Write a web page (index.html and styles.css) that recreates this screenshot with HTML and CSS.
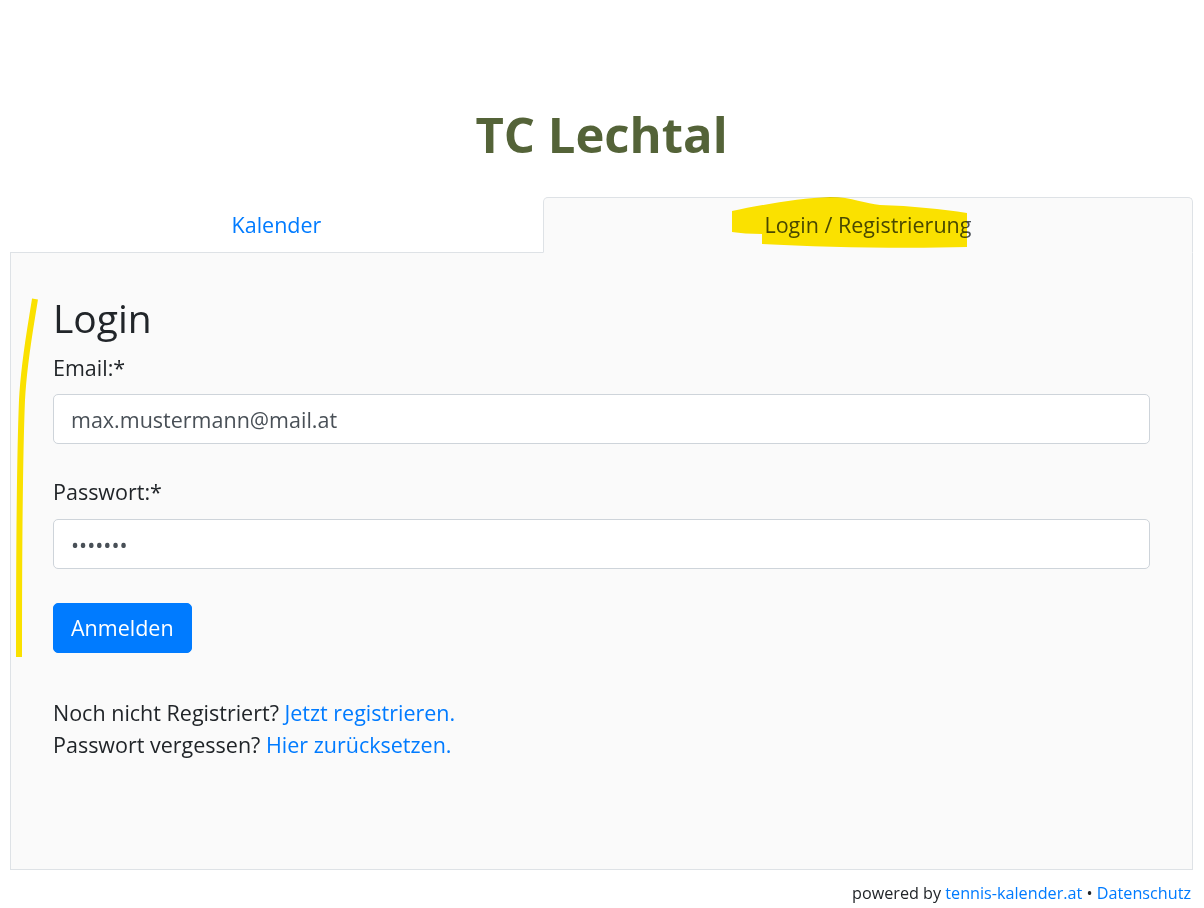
FILE: index.html
```html
<!DOCTYPE html>
<html lang="de">
<head>
<meta charset="utf-8">
<title>TC Lechtal – Login</title>
<link rel="stylesheet" href="styles.css">
</head>
<body>
<div class="page">
  <header class="site-header">
    <h1 class="club-name">TC Lechtal</h1>
  </header>
  <nav class="tabs">
    <a class="tab" href="#">Kalender</a>
    <a class="tab tab-active" href="#">Login / Registrierung</a>
  </nav>
  <main class="panel">
    <h2 class="panel-title">Login</h2>
    <form class="login-form">
      <div class="field">
        <label class="field-label" for="email">Email:*</label>
        <input class="control" id="email" type="text" value="max.mustermann@mail.at">
      </div>
      <div class="field field-last">
        <label class="field-label" for="pw">Passwort:*</label>
        <input class="control" id="pw" type="password" value="1234567">
      </div>
      <button class="btn-primary" type="button">Anmelden</button>
    </form>
    <p class="hints">Noch nicht Registriert? <a href="#">Jetzt registrieren.</a><br>Passwort vergessen? <a href="#">Hier zurücksetzen.</a></p>
  </main>
  <footer class="site-footer">powered by <a href="#">tennis-kalender.at</a> • <a href="#">Datenschutz</a></footer>
</div>
<svg class="marks" width="1204" height="908" viewBox="0 0 1204 908" xmlns="http://www.w3.org/2000/svg">
  <path class="mark-fill" d="M732,211 C760,205 800,198 830,197 C852,197 866,204 880,205 C912,206 942,209 967,213 L967,247 C900,249 820,247 762,244 L762,234 C750,234 740,233 732,232 Z"/>
  <path class="mark-line" d="M35,299 C31,325 24,360 22,400 C20,450 19,550 19,657"/>
</svg>
</body>
</html>
```

FILE: styles.css
```css
html, body {
  margin: 0;
  padding: 0;
  background: #ffffff;
}

body {
  font-family: "Open Sans", "Noto Sans", sans-serif;
  font-size: 21.5px;
  line-height: 30px;
  color: #212529;
  position: relative;
}

a {
  color: #007bff;
  text-decoration: none;
}

.page {
  padding: 0 11px 0 10px;
}

.site-header {
  padding-top: 105px;
  margin-bottom: 34px;
}

.club-name {
  margin: 0;
  text-align: center;
  font-size: 49px;
  line-height: 58px;
  font-weight: 700;
  color: #546338;
}

.tabs {
  display: flex;
  border-bottom: 1px solid #dee2e6;
}

.tab {
  flex: 1 1 auto;
  text-align: center;
  padding: 12px 20px;
  border: 1px solid transparent;
  border-top-left-radius: 5px;
  border-top-right-radius: 5px;
  margin-bottom: -1px;
  color: #007bff;
}

.tab-active {
  color: #495057;
  background: #fafafa;
  border-color: #dee2e6 #dee2e6 #fafafa;
}

.panel {
  background: #fafafa;
  border: 1px solid #dee2e6;
  border-top: none;
  padding: 41px 42px 109px;
}

.panel-title {
  margin: 0 0 11px;
  font-size: 39px;
  line-height: 48px;
  font-weight: 400;
  color: #212529;
}

.field {
  margin-bottom: 33px;
}

.field-last {
  margin-bottom: 34px;
}

.field-label {
  display: block;
  margin-bottom: 11px;
}

.field-last .field-label {
  margin-bottom: 12px;
}

.control {
  display: block;
  box-sizing: border-box;
  width: 100%;
  height: 50px;
  padding: 9px 17px;
  font-family: inherit;
  font-size: 21.5px;
  line-height: 30px;
  color: #495057;
  background: #ffffff;
  border: 1px solid #ced4da;
  border-radius: 5px;
}

.btn-primary {
  display: block;
  box-sizing: border-box;
  height: 50px;
  padding: 9px 17px;
  font-family: inherit;
  font-size: 21.5px;
  line-height: 30px;
  color: #ffffff;
  background: #007bff;
  border: 1px solid #007bff;
  border-radius: 5px;
}

.hints {
  margin: 44px 0 0;
  line-height: 31.5px;
}

.site-footer {
  margin-top: 11px;
  padding-right: 2px;
  text-align: right;
  font-size: 16.2px;
  line-height: 24px;
}

.marks {
  position: absolute;
  top: 0;
  left: 0;
  pointer-events: none;
  mix-blend-mode: multiply;
}

.mark-fill {
  fill: #ffe600;
}

.mark-line {
  fill: none;
  stroke: #ffe600;
  stroke-width: 6;
}
```
